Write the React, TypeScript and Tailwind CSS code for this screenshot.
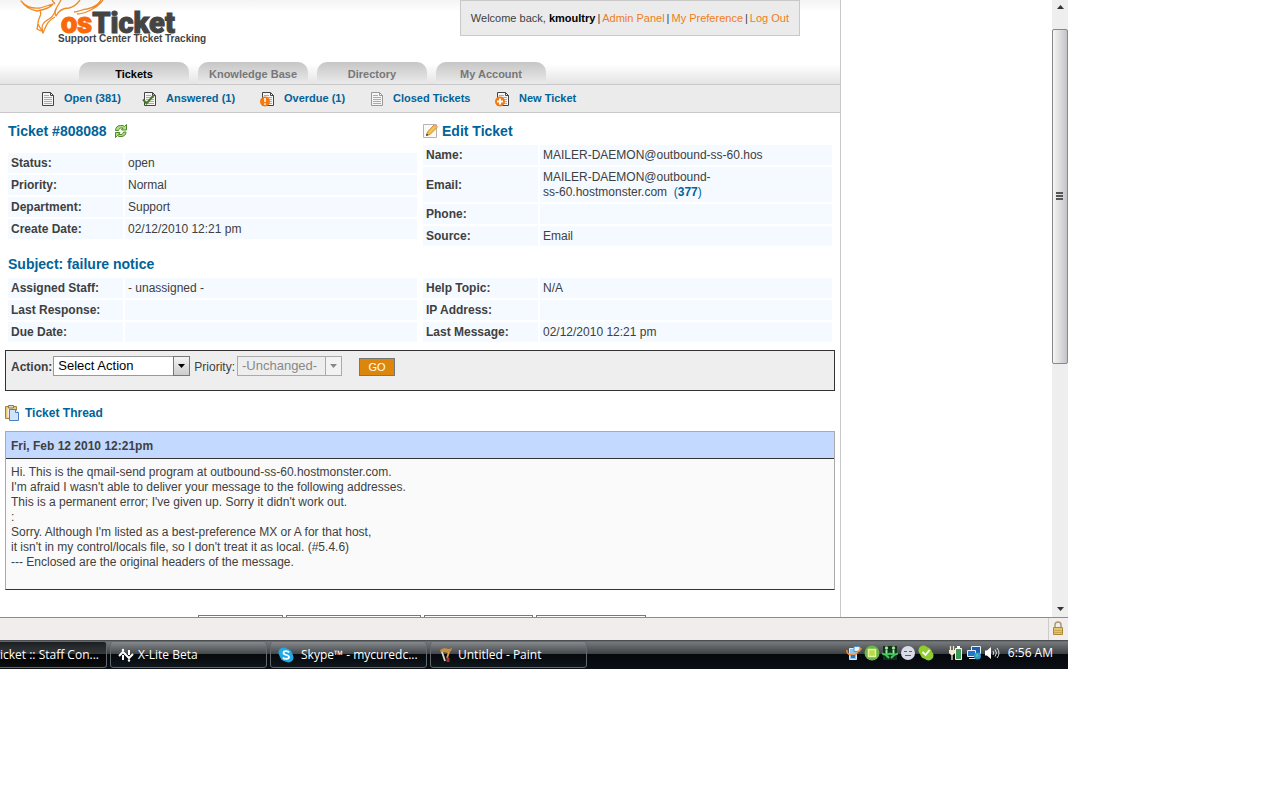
import type { ReactNode } from 'react';

type Field = { label: string; value: ReactNode };

const tabs = ['Tickets', 'Knowledge Base', 'Directory', 'My Account'];

const ticketInfo: Field[] = [
  { label: 'Status:', value: 'open' },
  { label: 'Priority:', value: 'Normal' },
  { label: 'Department:', value: 'Support' },
  { label: 'Create Date:', value: '02/12/2010 12:21 pm' },
];

const contactInfo: Field[] = [
  { label: 'Name:', value: 'MAILER-DAEMON@outbound-ss-60.hos' },
  {
    label: 'Email:',
    value: (
      <>
        MAILER-DAEMON@outbound-
        <br />
        ss-60.hostmonster.com &nbsp;
        <a href="#related" className="text-[#00639a]">(<b>377</b>)</a>
      </>
    ),
  },
  { label: 'Phone:', value: '' },
  { label: 'Source:', value: 'Email' },
];

const staffInfo: Field[] = [
  { label: 'Assigned Staff:', value: '- unassigned -' },
  { label: 'Last Response:', value: '' },
  { label: 'Due Date:', value: '' },
];

const messageInfo: Field[] = [
  { label: 'Help Topic:', value: 'N/A' },
  { label: 'IP Address:', value: '' },
  { label: 'Last Message:', value: '02/12/2010 12:21 pm' },
];

const message = [
  'Hi. This is the qmail-send program at outbound-ss-60.hostmonster.com.',
  "I'm afraid I wasn't able to deliver your message to the following addresses.",
  "This is a permanent error; I've given up. Sorry it didn't work out.",
  ':',
  "Sorry. Although I'm listed as a best-preference MX or A for that host,",
  "it isn't in my control/locals file, so I don't treat it as local. (#5.4.6)",
  '--- Enclosed are the original headers of the message.',
];

function PageIcon({ faded = false, badge }: { faded?: boolean; badge?: 'check' | 'alert' | 'plus' }) {
  const ink = faded ? '#999' : '#444';
  return (
    <svg viewBox="0 0 16 16" className="w-4 h-4 shrink-0" aria-hidden="true">
      <path d="M2.500 1.500h8l3 3v10h-11z" fill="#f6f6f6" stroke={ink} />
      <path d="M10.500 1.500v3h3" fill="none" stroke={ink} />
      <path d="M4 4.500h5M4 6.500h8M4 8.500h8M4 10.500h8M4 12.500h8" stroke="#aaa" />
      {badge === 'check' && (
        <path d="M1 8.500l3.500 4L12 4" fill="none" stroke="#4c7a2a" strokeWidth="2" />
      )}
      {badge === 'alert' && (
        <>
          <circle cx="5" cy="10.500" r="5" fill="#f47a10" />
          <path d="M5 7v4M5 12.200v1.600" stroke="#fff" strokeWidth="1.600" />
        </>
      )}
      {badge === 'plus' && (
        <>
          <circle cx="5" cy="10.500" r="5" fill="#f47a10" />
          <path d="M5 7.500v6M2 10.500h6" stroke="#fff" strokeWidth="2" />
        </>
      )}
    </svg>
  );
}

function RefreshIcon() {
  return (
    <svg viewBox="0 0 14 14" className="w-3.5 h-3.5" aria-hidden="true">
      <path d="M1.500 6.500c0-3 2-5 5-5h2.500l1.500 1 2-2v5.500H7.500l1.500-2H7c-1.500 0-2 1-2.500 2.500z" fill="#b5dc8a" stroke="#4f8a25" strokeLinejoin="round" />
      <path d="M12 8c0 3-2 4.500-5 4.500H5l-1.500-1-2 2V8.500H6l-1.500 2H7c1.500 0 2-1 2.500-2.500z" fill="#b5dc8a" stroke="#4f8a25" strokeLinejoin="round" />
    </svg>
  );
}

function EditIcon() {
  return (
    <svg viewBox="0 0 16 16" className="w-4 h-4" aria-hidden="true">
      <path d="M.5 1.500h13v13H.5z" fill="#fafafa" stroke="#b4b4b4" />
      <path d="M3.500 12.500l1-3.500L11 2l3 2.500-7 7z" fill="#f6c352" stroke="#c98a2c" />
      <path d="M10.500 2.500L12 1l3 2.500-1.500 1.500z" fill="#f2a07c" />
      <path d="M3 13l.8-2.500 1.500 1.600z" fill="#333" />
    </svg>
  );
}

function ThreadIcon() {
  return (
    <svg viewBox="0 0 16 16" className="w-4 h-4" aria-hidden="true">
      <path d="M.5 1.500h11v12H.5z" fill="#e8c877" stroke="#a5822f" />
      <path d="M2.500 3.500h7v9h-7z" fill="#f3f0e4" />
      <path d="M3.500.5h5v2.500h-5z" fill="#ddd" stroke="#8a7a4a" />
      <path d="M4.500 4.500h6l3 3v8h-9z" fill="#cfe3fb" stroke="#4b7fc0" />
      <path d="M10.500 4.500v3h3" fill="#fff" stroke="#4b7fc0" />
    </svg>
  );
}

function Logo() {
  return (
    <a href="#home" className="block pl-5" aria-label="osTicket Support Center Ticket Tracking">
      <svg viewBox="0 0 190 46" className="w-[190px] h-[46px]">
        <g fill="none" stroke="#f08a24" strokeWidth="1.300" strokeLinejoin="round">
          <path d="M1 1C6 7 12 9 20 8L33 4c-3 4-10 6-16 7-6-1-12-4-16-10z" />
          <path d="M20 11c3 4-3 8-2 13l5 9c-2-7-1-10 6-14 5-3 6-7 7-10" />
          <path d="M23 33c3-7 4-12 12-16M18 24l-1 5 4 2" />
          <path d="M35 4L32 0M41 0c-3 6-8 11-5 16 3-6 8-8 13-8 5-1 8-4 11-8" />
          <path d="M54 12c5 0 8-3 13-3 6-1 12-5 14-9M57 14c8 0 20-6 26-14" />
        </g>
        <text x="41" y="33" fontSize="29" fontWeight="900" fontFamily="'Liberation Sans Narrow', Roboto, sans-serif" fill="#444" stroke="#444" strokeWidth="1">
          <tspan fill="#f9690a" stroke="#f9690a">os</tspan>Ticket
        </text>
        <text x="38" y="42" fontSize="10" fontWeight="bold" fontFamily="'Liberation Sans', sans-serif" fill="#444">
          Support Center Ticket Tracking
        </text>
      </svg>
    </a>
  );
}

function InfoTable({ rows }: { rows: Field[] }) {
  return (
    <table className="w-full table-fixed border-separate border-spacing-[2px] leading-[15px]">
      <tbody>
        {rows.map((row) => (
          <tr key={row.label} className="bg-[#f4faff]">
            <th scope="row" className="w-[115px] h-5 px-[3px] pt-[3px] pb-[2px] text-left font-bold">{row.label}</th>
            <td className="px-[3px] pt-[3px] pb-[2px]">{row.value}</td>
          </tr>
        ))}
      </tbody>
    </table>
  );
}

function Header() {
  return (
    <header>
      <div className="h-[84px] flex flex-col justify-between bg-[linear-gradient(#f4f4f4,#fff_12px,#fff_64px,#e4e4e4)]">
        <div className="flex justify-between items-start pr-10">
          <Logo />
          <p className="h-9 px-2.5 flex items-center gap-[2px] border border-[#c8c8c8] bg-[#ebebeb] text-[11px]">
            <span>Welcome back, <b className="text-black">kmoultry</b></span>
            <span>|</span>
            <a href="#admin" className="text-[#f07c1c]">Admin Panel</a>
            <span>|</span>
            <a href="#preference" className="text-[#f07c1c]">My Preference</a>
            <span>|</span>
            <a href="#logout" className="text-[#f07c1c]">Log Out</a>
          </p>
        </div>
        <nav className="flex gap-[9px] pl-[79px]">
          {tabs.map((tab, i) => (
            <a
              key={tab}
              href="#tab"
              className={`w-[110px] h-[22px] pt-0.5 rounded-t-[10px] bg-linear-to-b from-[#c6c6c6] to-[#ebebeb] text-[11px] font-bold flex items-center justify-center ${
                i === 0 ? 'text-black' : 'text-[#777]'
              }`}
            >
              {tab}
            </a>
          ))}
        </nav>
      </div>
      <nav className="h-[29px] pl-10 flex items-center border-y border-[#c8c8c8] bg-[#ebebeb] text-[11px] font-bold text-[#00639a]">
        <a href="#open" className="w-[102px] flex items-center gap-2"><PageIcon />Open (381)</a>
        <a href="#answered" className="w-[118px] flex items-center gap-2"><PageIcon badge="check" />Answered (1)</a>
        <a href="#overdue" className="w-[109px] flex items-center gap-2"><PageIcon badge="alert" />Overdue (1)</a>
        <a href="#closed" className="w-[126px] flex items-center gap-2"><PageIcon faded />Closed Tickets</a>
        <a href="#new" className="flex items-center gap-2"><PageIcon badge="plus" />New Ticket</a>
      </nav>
    </header>
  );
}

function ActionBar() {
  return (
    <form className="h-[41px] mt-1.5 pl-[5px] pt-[5px] flex items-start border border-[#333] bg-[#eee]">
      <label htmlFor="action" className="leading-[22px] font-bold">Action:</label>
      <div className="relative ml-px">
        <select id="action" className="appearance-none w-[137px] h-5 px-1 border border-[#999] bg-white text-[13px] leading-[18px] text-black">
          <option>Select Action</option>
        </select>
        <span className="absolute right-0 top-0 w-[17px] h-5 flex items-center justify-center border border-[#777] bg-linear-to-b from-[#f4f4f4] to-[#ccc] pointer-events-none">
          <svg viewBox="0 0 7 4" className="w-[7px] h-1"><path d="M0 0h7L3.500 4z" fill="#000" /></svg>
        </span>
      </div>
      <label htmlFor="priority" className="ml-1 leading-[22px]">Priority:</label>
      <div className="relative ml-[2px]">
        <select id="priority" disabled className="appearance-none w-[105px] h-5 px-1 border border-[#aaa] bg-[#eee] text-[13px] leading-[18px] text-[#888] opacity-100">
          <option>-Unchanged-</option>
        </select>
        <span className="absolute right-0 top-0 w-[17px] h-5 flex items-center justify-center border border-[#aaa] bg-[#f3f3f3] pointer-events-none">
          <svg viewBox="0 0 7 4" className="w-[7px] h-1"><path d="M0 0h7L3.500 4z" fill="#888" /></svg>
        </span>
      </div>
      <button type="button" className="ml-[17px] mt-0.5 w-9 h-[18px] border border-[#777] bg-[#dd860c] text-[11px] leading-4 text-white">GO</button>
    </form>
  );
}

function TicketPage() {
  return (
    <div className="w-full max-w-[841px] border-r border-[#c8c8c8] bg-white">
      <Header />
      <main className="px-[5px] pt-2">
        <div className="grid grid-cols-2 gap-[2px] px-px">
          <section>
            <h2 className="h-5 mb-2.5 pl-[2px] flex items-center gap-[7px] text-sm font-bold text-[#00639a]">
              Ticket #808088
              <a href="#reload" aria-label="Reload"><RefreshIcon /></a>
            </h2>
            <InfoTable rows={ticketInfo} />
          </section>
          <section>
            <h2 className="h-5 mb-0.5 pl-[2px] text-sm font-bold text-[#00639a]">
              <a href="#edit" className="flex items-center gap-[3px]"><EditIcon />Edit Ticket</a>
            </h2>
            <InfoTable rows={contactInfo} />
          </section>
        </div>
        <h2 className="h-5 mt-1.5 mb-0.5 pl-[3px] text-sm font-bold text-[#00639a]">Subject: failure notice</h2>
        <div className="grid grid-cols-2 gap-[2px] px-px">
          <InfoTable rows={staffInfo} />
          <InfoTable rows={messageInfo} />
        </div>
        <ActionBar />
        <h3 className="h-5 mt-3 flex items-center gap-1 font-bold text-[#00639a]"><ThreadIcon />Ticket Thread</h3>
        <article className="mt-2 border border-[#aaa] border-b-[#333] bg-[#fafafa]">
          <h4 className="h-[27px] pt-px px-[5px] flex items-center border-b border-[#333] bg-[#c3d9ff] font-bold">
            Fri, Feb 12 2010 12:21pm
          </h4>
          <p className="px-[5px] pt-1.5 pb-[19px] leading-[15px]">
            {message.map((line) => (
              <span key={line} className="block">{line}</span>
            ))}
          </p>
        </article>
        {/* Top edge of the reply tabs, the rest is below the fold */}
        <div className="h-0.5 mt-[25px] pl-[3px] flex justify-center gap-[3px]" aria-hidden="true">
          <div className="w-[85px] border border-b-0 border-[#777]" />
          <div className="w-[135px] border border-b-0 border-[#777]" />
          <div className="w-[109px] border border-b-0 border-[#777]" />
          <div className="w-[110px] border border-b-0 border-[#777]" />
        </div>
      </main>
    </div>
  );
}

function Scrollbar() {
  return (
    <div className="w-4 shrink-0 flex flex-col bg-[#eee]" aria-hidden="true">
      <div className="h-[29px] pt-[5px] flex justify-center items-start">
        <svg viewBox="0 0 7 4" className="w-[7px] h-1"><path d="M0 4h7L3.500 0z" fill="#333" /></svg>
      </div>
      <div className="h-[335px] pr-px pb-0.5 flex flex-col items-center justify-center gap-px rounded-[2px] border border-[#888] bg-linear-to-r from-[#f6f6f6] to-[#c4c4c8]">
        <div className="w-[7px] h-[2px] bg-[#555]" />
        <div className="w-[7px] h-[2px] bg-[#555]" />
        <div className="w-[7px] h-[2px] bg-[#555]" />
      </div>
      <div className="flex-1 pb-1.5 flex justify-center items-end">
        <svg viewBox="0 0 7 4" className="w-[7px] h-1"><path d="M0 0h7L3.500 4z" fill="#333" /></svg>
      </div>
    </div>
  );
}

function StatusBar() {
  return (
    <div className="h-[23px] flex justify-end border-t border-[#8c8c8c] bg-[#f0edec]">
      <div className="w-5 pr-px pb-0.5 flex items-center justify-center border-l border-[#ccc]">
        <svg viewBox="0 0 12 14" className="w-3 h-3.5" aria-hidden="true">
          <path d="M3 7V4a3 3 0 0 1 6 0v3" fill="none" stroke="#a89a70" strokeWidth="1.500" />
          <path d="M1.500 6.500h9v7h-9z" fill="#e3c56c" stroke="#a98a3a" />
          <path d="M2 9.500h8M2 11.500h8" stroke="#c9a64c" />
        </svg>
      </div>
    </div>
  );
}

function TaskButton({ icon, children }: { icon: ReactNode; children: ReactNode }) {
  return (
    <button
      type="button"
      className="w-[157px] h-[27px] pl-[7px] flex items-center gap-1 rounded-[3px] border border-[#62686c] bg-[linear-gradient(#85898b,#43474a_48%,#06090d_50%,#10161c)] text-left text-white whitespace-nowrap"
    >
      {icon}
      {children}
    </button>
  );
}

function Tray() {
  return (
    <div className="ml-auto mb-1 flex items-center gap-[2px]">
      <svg viewBox="0 0 16 16" className="w-4 h-4" aria-hidden="true">
        <path d="M3.500 3.500h7v11h-7z" fill="#8ec5ee" stroke="#d8ecfa" />
        <path d="M8 1.500h6v5H8z" fill="#e8f3fb" stroke="#4d8fca" />
        <path d="M1 5c-1 5 8 7 10 3s4-2 4-5" fill="none" stroke="#f08b2c" strokeWidth="1.600" />
        <path d="M5 10h4v3H5z" fill="#3572b8" />
      </svg>
      <svg viewBox="0 0 16 16" className="w-4 h-4" aria-hidden="true">
        <circle cx="8" cy="8" r="7.500" fill="#6cb445" />
        <path d="M4.500 4.500h7v7h-7z" fill="#b8d84a" stroke="#e4f2a0" strokeWidth="1.500" />
      </svg>
      <svg viewBox="0 0 16 16" className="w-4 h-4" aria-hidden="true">
        <path d="M1 1h14v14H1z" fill="#13301c" />
        <circle cx="4.500" cy="3" r="1.700" fill="#9be09b" />
        <circle cx="11.500" cy="3" r="1.700" fill="#9be09b" />
        <path d="M4.500 5v4M11.500 5v4" stroke="#9be09b" strokeWidth="2" />
        <path d="M0 8.500l4 1.500 4-1.500 4 1.500 4-1.500M4 10l3 3M12 10l-3 3" stroke="#3fcb5a" strokeWidth="2" fill="none" />
      </svg>
      <svg viewBox="0 0 16 16" className="w-4 h-4" aria-hidden="true">
        <circle cx="8" cy="8" r="7" fill="#d9dce6" />
        <path d="M4 6.500h3M9 6.500h3M5 10.500h6" stroke="#5b6070" />
      </svg>
      <svg viewBox="0 0 16 16" className="w-4 h-4" aria-hidden="true">
        <circle cx="5.500" cy="5.500" r="5" fill="#8fce2c" />
        <circle cx="10.500" cy="10.500" r="5" fill="#8fce2c" />
        <circle cx="8" cy="8" r="6" fill="#8fce2c" />
        <path d="M4.500 7l3 3 4-5" fill="none" stroke="#fff" strokeWidth="1.800" />
      </svg>
      <svg viewBox="0 0 16 16" className="w-4 h-4 ml-3" aria-hidden="true">
        <path d="M7.500 3.500h6v11h-6z" fill="#3f9a55" stroke="#fff" />
        <path d="M9 2h3" stroke="#fff" strokeWidth="2" />
        <path d="M2.500 1v4M5.500 1v4M4 9v6" stroke="#f3e9d0" strokeWidth="1.300" />
        <path d="M1 5h6v3l-2 2H3L1 8z" fill="#f3e9d0" />
      </svg>
      <svg viewBox="0 0 16 16" className="w-4 h-4" aria-hidden="true">
        <path d="M5.500 1.500h9v7h-9z" fill="#1c5fae" stroke="#e6eef8" />
        <path d="M1.500 5.500h8v6h-8z" fill="#2a74c8" stroke="#e6eef8" />
        <path d="M3 13.500h6" stroke="#e6eef8" />
        <circle cx="11.500" cy="11" r="3.500" fill="#2b9ad8" />
        <path d="M9.500 10l2-1.500 1 2-1.500 2z" fill="#64c463" />
      </svg>
      <svg viewBox="0 0 16 16" className="w-4 h-4" aria-hidden="true">
        <path d="M1 5.500h2L7 2v12l-4-3.500H1z" fill="#fff" />
        <path d="M9 6q1.500 2 0 4M11 4.500q3 3.500 0 7M13 3q4 5 0 10" fill="none" stroke="#dde2e6" />
      </svg>
      <span className="ml-1.5 mr-[15px] text-white">6:56 AM</span>
    </div>
  );
}

function Taskbar() {
  return (
    <footer className="h-[29px] flex items-center gap-[3px] bg-[linear-gradient(#3c4043,#75797b_2px,#3d4144_48%,#05080c_50%,#0b1016)] font-['Open_Sans','Noto_Sans',sans-serif] text-xs">
      <button
        type="button"
        className="w-[107px] h-[27px] pt-px rounded-r-[3px] border border-l-0 border-[#62686c] bg-[linear-gradient(#1c1f22,#35393c_48%,#020304_50%,#0a0c0e)] text-left text-white whitespace-nowrap"
      >
        icket :: Staff Con...
      </button>
      <TaskButton
        icon={
          <svg viewBox="0 0 16 14" className="w-4 h-3.5" aria-hidden="true">
            <path d="M5 7v5M11 2v5" stroke="#fff" strokeWidth="2" />
            <path d="M1 8l4-4 6 6 4-4" fill="none" stroke="#fff" strokeWidth="2" />
            <circle cx="5" cy="2" r="1.200" fill="#fff" />
            <circle cx="11" cy="12.500" r="1.200" fill="#fff" />
          </svg>
        }
      >
        X-Lite Beta
      </TaskButton>
      <TaskButton
        icon={
          <svg viewBox="0 0 16 16" className="w-4 h-4 mr-[3px]" aria-hidden="true">
            <circle cx="5.500" cy="5.500" r="5" fill="#1fa9e8" />
            <circle cx="10.500" cy="10.500" r="5" fill="#1fa9e8" />
            <circle cx="8" cy="8" r="6.500" fill="#1fa9e8" />
            <path d="M11 5.500C10 3.500 5.500 3.500 5.500 6S11 7.500 11 10s-5 2.500-6 .5" fill="none" stroke="#fff" strokeWidth="1.800" />
          </svg>
        }
      >
        Skype™ - mycuredc...
      </TaskButton>
      <TaskButton
        icon={
          <svg viewBox="0 0 16 16" className="w-4 h-4" aria-hidden="true">
            <path d="M2 3l4-2 5 1 3-1-1 3-3 2-4-1-3 1z" fill="#c98f3a" />
            <path d="M4 5l3 9" stroke="#d8d8d8" strokeWidth="1.800" />
            <path d="M11 5l-2 6" stroke="#e0a04a" strokeWidth="1.800" />
            <path d="M8.500 10.500h3V15h-3z" fill="#a8322a" />
          </svg>
        }
      >
        Untitled - Paint
      </TaskButton>
      <Tray />
    </footer>
  );
}

export default function App() {
  return (
    <div className="min-h-screen bg-white font-['Liberation_Sans',Arial,sans-serif] text-xs text-[#404040]">
      <div className="w-full max-w-[1068px]">
        <div className="flex justify-between">
          <TicketPage />
          <Scrollbar />
        </div>
        <StatusBar />
        <Taskbar />
      </div>
    </div>
  );
}
